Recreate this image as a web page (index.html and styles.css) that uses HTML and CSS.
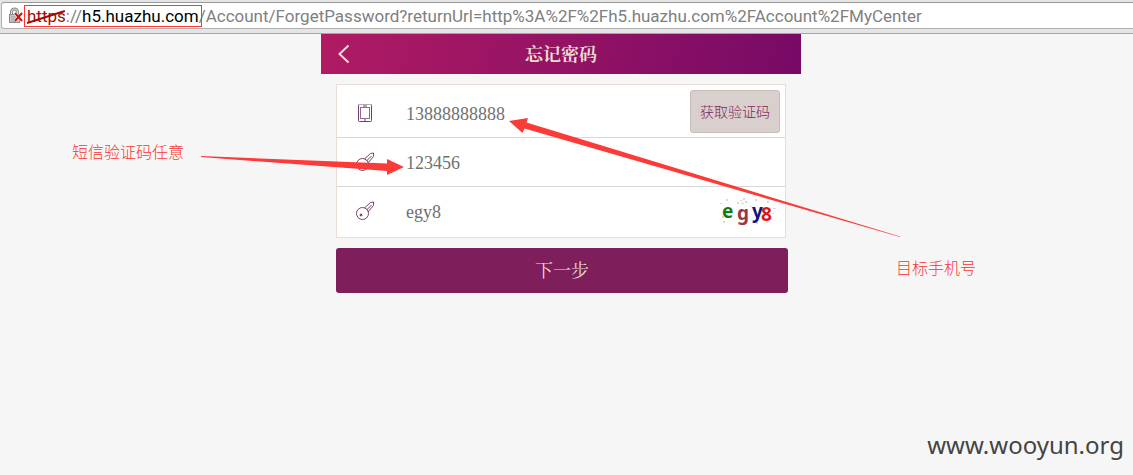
FILE: index.html
```html
<!DOCTYPE html>
<html lang="zh-CN">
<head>
<meta charset="utf-8">
<title>忘记密码</title>
<link rel="stylesheet" href="styles.css">
</head>
<body>
<div class="toolbar">
  <div class="address">
    <svg class="lock" width="17" height="18" viewBox="0 0 17 18" aria-hidden="true">
      <path d="M3.500 8V5a3 3 0 0 1 6 0v3" fill="none" stroke="#888" stroke-width="3"/>
      <path d="M3.500 8V5a3 3 0 0 1 6 0v3" fill="none" stroke="#e4e4e4" stroke-width="1"/>
      <rect x="1.500" y="7.500" width="10" height="8" fill="#cacaca" stroke="#888"/>
      <path d="M3 10h7M3 12h7M3 14h7" stroke="#a5a5a5" stroke-width="1"/>
      <path d="M7 6l7 8M14 6l-7 8" stroke="#fff" stroke-width="3"/>
      <path d="M7 6l7 8M14 6l-7 8" stroke="#c8140f" stroke-width="2"/>
    </svg>
    <span class="url"><span class="origin"><span class="scheme">https<svg class="strike" viewBox="0 0 40 14" preserveAspectRatio="none" aria-hidden="true"><path d="M0 13L39 1" stroke="#a00808" stroke-width="2"/></svg></span>://<span class="host">h5.huazhu.com</span></span>/Account/ForgetPassword?returnUrl=http%3A%2F%2Fh5.huazhu.com%2FAccount%2FMyCenter</span>
  </div>
</div>

<div class="stage">
  <main class="phone">
    <header class="titlebar">
      <a class="back" href="#" aria-label="返回">
        <svg width="12" height="20" viewBox="0 0 12 20"><path d="M10.500 1.500L1.500 10l9 8.500" fill="none" stroke="#eadcd6" stroke-width="2"/></svg>
      </a>
      <h1 class="title">忘记密码</h1>
    </header>
    <form class="form">
      <div class="card">
        <div class="row row-phone">
          <label class="icon" for="phone" aria-label="手机号">
            <svg width="20" height="20" viewBox="0 0 20 20" fill="none" stroke="#7a3a6c">
              <rect x="3.500" y="1.500" width="13" height="17" rx="1"/>
              <rect x="5.500" y="4.500" width="9" height="11" stroke="#8d6d92"/>
              <path d="M3 1.500h14" stroke="#b9a9a9"/><path d="M8 3h4M9 17h2"/>
            </svg>
          </label>
          <input class="field" id="phone" type="text" value="13888888888">
          <button class="send" type="button">获取验证码</button>
        </div>
        <div class="row">
          <label class="icon" for="sms" aria-label="短信验证码">
            <svg width="20" height="20" viewBox="0 0 20 20" fill="none" stroke="#76436b">
              <circle cx="7.500" cy="12.500" r="6"/><circle cx="6" cy="14" r="1" fill="#7a1f5a"/>
              <path d="M9.500 7L15.500 1.500l3-.500v3.500L13 11M11.500 9l5-5"/>
            </svg>
          </label>
          <input class="field" id="sms" type="text" value="123456">
        </div>
        <div class="row row-last">
          <label class="icon" for="code" aria-label="图形验证码">
            <svg width="20" height="20" viewBox="0 0 20 20" fill="none" stroke="#76436b">
              <circle cx="7.500" cy="12.500" r="6"/><circle cx="6" cy="14" r="1" fill="#7a1f5a"/>
              <path d="M9.500 7L15.500 1.500l3-.500v3.500L13 11M11.500 9l5-5"/>
            </svg>
          </label>
          <input class="field" id="code" type="text" value="egy8">
          <svg class="captcha" width="60" height="30" viewBox="0 0 60 30" role="img" aria-label="验证码">
            <g fill="#d3dcd3">
              <path d="M6 3h2v2h-2zM0 7h2v1h-2zM17 6h2v2h-2zM20 4h2v1h-2zM23 2h2v2h-2zM25 5h2v2h-2zM21 7h3v1h-3zM35 3h2v2h-2zM47 5h2v2h-2zM53 12h3v1h-3zM52 17h2v1h-2zM2 20h2v2h-2zM3 25h2v2h-2zM19 22h2v2h-2zM36 26h2v2h-2zM46 26h2v1h-2zM50 22h2v2h-2zM30 10h2v1h-2z"/>
            </g>
            <g class="captcha-text">
              <text x="2" y="22" fill="#127a12">e</text>
              <text x="17" y="24" fill="#963a44">g</text>
              <text x="32" y="22" fill="#10108a">y</text>
              <text x="41" y="25" fill="#d81818">8</text>
            </g>
          </svg>
        </div>
      </div>
      <button class="next" type="button">下一步</button>
    </form>
  </main>
</div>

<svg class="arrows" width="1133" height="475" viewBox="0 0 1133 475" aria-hidden="true">
  <path d="M509 121L528 118L526.500 122.500L900 236.500V237L524.500 128.500L522.500 133Z"/>
  <path d="M201 156L387 163.500V159L404 167L387 175V171L201 157Z"/>
</svg>
<p class="note note-sms">短信验证码任意</p>
<p class="note note-target">目标手机号</p>
<p class="watermark">www.wooyun.org</p>
</body>
</html>
```
FILE: styles.css
```css
* {
  box-sizing: border-box;
}

body {
  margin: 0;
  min-height: 100vh;
  position: relative;
  background: #f6f6f6;
  font-family: "Liberation Serif", "Noto Sans CJK SC", serif;
}

.toolbar {
  height: 34px;
  padding: 2px 0 4px 1px;
  background: #e4e4e4;
  border-bottom: 1px solid #a5a5a5;
}

.address {
  display: flex;
  align-items: center;
  height: 27px;
  padding-left: 6px;
  background: #fff;
  border: 1px solid #b0b0b0;
  border-top-color: #999;
  border-right: 0;
  border-radius: 3px 0 0 3px;
}

.lock {
  flex: none;
  margin-right: 2px;
}

.url {
  color: #808080;
  font: 17px/22px Roboto, "Open Sans", sans-serif;
  white-space: nowrap;
}

.origin,
.scheme {
  position: relative;
}

.origin::after {
  content: "";
  position: absolute;
  inset: -1px -3px;
  border: 1px solid #f33;
}

.scheme {
  color: #a01010;
}

.strike {
  position: absolute;
  left: 0;
  top: 4px;
  width: 100%;
  height: 14px;
}

.host {
  color: #000;
}

.stage {
  padding-right: 11px;
}

.phone {
  max-width: 480px;
  margin: 0 auto;
}

.titlebar {
  display: grid;
  grid-template-columns: 45px 1fr 45px;
  align-items: center;
  height: 40px;
  background: linear-gradient(100deg, #b01b63, #770a66);
}

.back {
  display: flex;
  padding-left: 17px;
}

.title {
  margin: 0;
  padding-bottom: 2px;
  color: #eadcd0;
  font: bold 18px/24px "Noto Serif CJK SC", "Noto Sans CJK SC", serif;
  text-align: center;
}

.form {
  padding: 10px 13px 0 15px;
}

.card {
  margin-right: 2px;
  background: #fff;
  border: 1px solid #ecdcd6;
}

.row {
  display: flex;
  align-items: center;
  height: 49px;
  padding-right: 5px;
  border-bottom: 1px solid #d8d8d8;
}

.row-phone {
  height: 53px;
  padding-top: 4px;
}

.row-last {
  height: 50px;
  padding-bottom: 2px;
  border-bottom: 0;
}

.icon {
  display: flex;
  flex: none;
  width: 69px;
  padding-left: 18px;
}

.field {
  flex: 1;
  min-width: 0;
  height: 40px;
  padding: 2px 0 0;
  border: 0;
  outline: 0;
  background: transparent;
  color: #707070;
  font: 18px "Liberation Serif", serif;
}

.send {
  width: 90px;
  height: 43px;
  margin-bottom: 4px;
  padding: 0;
  background: #d9d0cd;
  border: 1px solid #c8bcb9;
  border-radius: 3px;
  color: #7e1e5a;
  font: 300 14px "Noto Sans CJK SC", sans-serif;
}

.captcha-text {
  font: bold 19px "Noto Sans", sans-serif;
}

.next {
  display: block;
  width: 100%;
  height: 45px;
  margin-top: 10px;
  padding: 0 0 4px;
  border: 0;
  border-radius: 3px;
  background: #7e1e5a;
  color: #eadcd0;
  font: 18px "Noto Serif CJK SC", "Noto Sans CJK SC", serif;
}

.arrows {
  position: absolute;
  left: 0;
  top: 0;
  fill: #fc3a38;
  pointer-events: none;
}

.note {
  position: absolute;
  margin: 0;
  color: #fb3434;
  font: 300 16px/24px "Noto Sans CJK SC", sans-serif;
}

.note-sms {
  left: 72px;
  top: 139px;
}

.note-target {
  left: 896px;
  top: 255px;
}

.watermark {
  position: absolute;
  right: 9px;
  bottom: 13px;
  margin: 0;
  color: #444;
  font: 24px/34px "Noto Sans", "Open Sans", sans-serif;
}
```
